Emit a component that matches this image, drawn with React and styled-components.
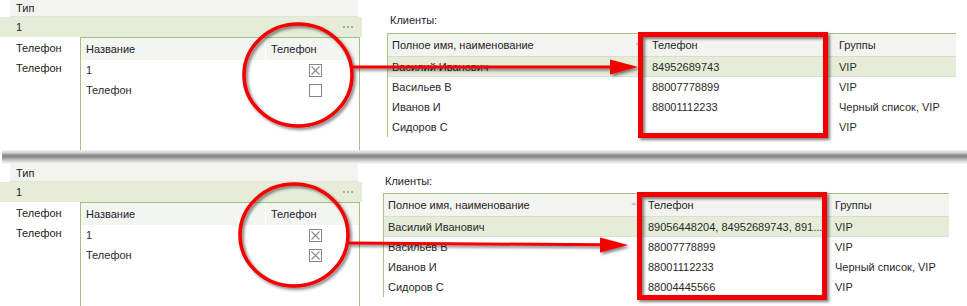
import React from "react";
import styled, { createGlobalStyle } from "styled-components";

const GlobalStyle = createGlobalStyle`
  html, body { margin: 0; padding: 0; background: #fff; }
  body {
    font-family: "Liberation Sans", Arial, sans-serif;
    font-size: 11px;
    color: #2a2a2a;
  }
`;

const Page = styled.div`
  width: 967px;
  height: 306px;
  overflow: hidden;
  display: flex;
  flex-direction: column;
  background: #fff;
`;

const Section = styled.section`
  position: relative;
  flex: none;
  height: ${(p) => p.$h}px;
  display: flex;
  overflow: hidden;
`;

const Divider = styled.div`
  flex: none;
  height: 14px;
  margin-left: 2px;
  background: linear-gradient(
    to bottom,
    #f2f2f2 0px,
    #d0d0d0 3px,
    #8e8e8e 5px,
    #8a8a8a 7px,
    #b4b4b4 9px,
    #e2e2e2 12px,
    #f6f6f6 14px
  );
`;

/* ---------- left panel ---------- */
const LeftPanel = styled.div`
  width: 362px;
  flex: none;
  display: flex;
  flex-direction: column;
`;

const TypeHeader = styled.div`
  height: ${(p) => p.$h}px;
  margin: 0 4px 0 10px;
  padding-left: 6px;
  display: flex;
  align-items: center;
  background: #f3f4ef;
  border-bottom: 1px solid #e1e4dc;
  color: #222;
`;

const GroupRow = styled.div`
  height: 20px;
  display: flex;
  align-items: center;
  justify-content: space-between;
  padding: 0 9px 0 16px;
  background: #e5edd9;
  color: #222;
`;

const Dots = styled.span`
  display: flex;
  gap: 2px;
  & > i {
    width: 2px;
    height: 2px;
    background: #a9a9a9;
  }
`;

const Body = styled.div`
  flex: 1;
  display: flex;
`;

const LabelCol = styled.div`
  width: 80px;
  flex: none;
  padding-top: 1px;
`;

const Label = styled.div`
  height: 20px;
  line-height: 20px;
  padding-left: 16px;
  color: #222;
`;

const InnerTable = styled.div`
  width: 278px;
  flex: none;
  border: 1px solid #a3c27f;
  border-bottom: none;
  display: flex;
  flex-direction: column;
`;

const InnerHead = styled.div`
  display: flex;
  height: 22px;
  gap: 1px;
`;

const InnerHeadCell = styled.div`
  width: ${(p) => p.$w}px;
  flex: ${(p) => (p.$w ? "none" : "1")};
  display: flex;
  align-items: center;
  padding-left: 5px;
  background: #f3f5f0;
  color: #241a33;
`;

const InnerRow = styled.div`
  display: flex;
  height: 20px;
  align-items: center;
`;

const NameCell = styled.div`
  width: 185px;
  flex: none;
  padding-left: 5px;
`;

const CheckCell = styled.div`
  flex: 1;
  display: flex;
  justify-content: center;
`;

const Box = styled.span`
  width: 13px;
  height: 13px;
  box-sizing: border-box;
  border: 1px solid #858585;
  background: #fff;
  display: flex;
  align-items: center;
  justify-content: center;
`;

/* ---------- right panel ---------- */
const RightPanel = styled.div`
  flex: 1;
  display: flex;
  flex-direction: column;
  padding-top: ${(p) => p.$top}px;
  gap: ${(p) => p.$gap}px;
`;

const Caption = styled.div`
  height: 14px;
  line-height: 14px;
  margin-left: ${(p) => p.$left}px;
  color: #2a1a33;
`;

const Grid = styled.div`
  margin-left: ${(p) => p.$left}px;
  width: ${(p) => p.$w}px;
  border-top: 1px solid #a6c381;
  border-left: 1px solid #a6c381;
  display: flex;
  flex-direction: column;
`;

const GridHead = styled.div`
  display: grid;
  grid-template-columns: ${(p) => p.$cols};
  height: 22px;
  background: #f3f4ef;
  border-bottom: 1px solid #d8ddd0;
  color: #1e1e1e;
`;

const GridRow = styled.div`
  display: grid;
  grid-template-columns: ${(p) => p.$cols};
  height: ${(p) => (p.$sel ? 19 : 20)}px;
  background: ${(p) => (p.$sel ? "#e5edd9" : "#fff")};
  border-bottom: ${(p) => (p.$sel ? "1px solid #d9ded2" : "none")};
`;

const Cell = styled.div`
  position: relative;
  display: flex;
  align-items: center;
  padding-left: ${(p) => p.$pad ?? 4}px;
  white-space: nowrap;
  overflow: hidden;
`;

const SortMark = styled.span`
  position: absolute;
  right: 6px;
  top: 8px;
  width: 0;
  height: 0;
  border-left: 3px solid transparent;
  border-right: 3px solid transparent;
  border-bottom: 3px solid #c4c4c4;
`;

/* ---------- annotation overlay ---------- */
const Overlay = styled.svg`
  position: absolute;
  left: 0;
  top: 0;
  pointer-events: none;
`;

function Annotations({ id, h, ellipse, arrow, rect }) {
  const [x1, y1, x2, y2] = arrow;
  const hx = x2 - 28;
  return (
    <Overlay width="967" height={h} viewBox={`0 0 967 ${h}`}>
      <defs>
        <filter id={id} x="-20%" y="-20%" width="140%" height="140%">
          <feDropShadow dx="2" dy="2" stdDeviation="1.4" floodColor="#000" floodOpacity="0.5" />
        </filter>
      </defs>
      <g filter={`url(#${id})`}>
        <ellipse cx={ellipse[0]} cy={ellipse[1]} rx={ellipse[2]} ry={ellipse[3]} fill="none" stroke="#f50000" strokeWidth="3.6" />
        <line x1={x1} y1={y1} x2={hx + 2} y2={y2 + (y1 - y2) * 0.08} stroke="#f50000" strokeWidth="3" />
        <polygon points={`${hx},${y2 - 7.5} ${x2},${y2} ${hx},${y2 + 7.5}`} fill="#f50000" />
        <rect x={rect[0]} y={rect[1]} width={rect[2]} height={rect[3]} fill="none" stroke="#f50000" strokeWidth="5" />
      </g>
    </Overlay>
  );
}

const XMark = () => (
  <svg width="11" height="11" viewBox="0 0 11 11">
    <path d="M1.5 1.5 L9.5 9.5 M9.5 1.5 L1.5 9.5" stroke="#8a8a8a" strokeWidth="1.1" />
  </svg>
);

function Panel({ typeH, checks, right, clients, overlay }) {
  const cols = right.cols;
  return (
    <Section $h={overlay.h}>
      <LeftPanel>
        <TypeHeader $h={typeH}>Тип</TypeHeader>
        <GroupRow>
          <span>1</span>
          <Dots><i /><i /><i /></Dots>
        </GroupRow>
        <Body>
          <LabelCol>
            <Label>Телефон</Label>
            <Label>Телефон</Label>
          </LabelCol>
          <InnerTable>
            <InnerHead>
              <InnerHeadCell $w={179}>Название</InnerHeadCell>
              <InnerHeadCell>Телефон</InnerHeadCell>
            </InnerHead>
            {["1", "Телефон"].map((n, i) => (
              <InnerRow key={n}>
                <NameCell>{n}</NameCell>
                <CheckCell>
                  <Box>{checks[i] && <XMark />}</Box>
                </CheckCell>
              </InnerRow>
            ))}
          </InnerTable>
        </Body>
      </LeftPanel>
      <RightPanel $top={right.top} $gap={right.gap}>
        <Caption $left={right.capLeft}>Клиенты:</Caption>
        <Grid $left={right.left} $w={right.w}>
          <GridHead $cols={cols}>
            <Cell>
              Полное имя, наименование
              <SortMark />
            </Cell>
            <Cell $pad={5}>Телефон</Cell>
            <Cell>Группы</Cell>
          </GridHead>
          {clients.map((c, i) => (
            <GridRow key={c[0]} $cols={cols} $sel={i === 0}>
              <Cell>{c[0]}</Cell>
              <Cell $pad={5}>{c[1]}</Cell>
              <Cell>{c[2]}</Cell>
            </GridRow>
          ))}
        </Grid>
      </RightPanel>
      <Annotations {...overlay} />
    </Section>
  );
}

const topClients = [
  ["Василий Иванович", "84952689743", "VIP"],
  ["Васильев В", "88007778899", "VIP"],
  ["Иванов И", "88001112233", "Черный список, VIP"],
  ["Сидоров С", "", "VIP"],
];

const bottomClients = [
  ["Василий Иванович", "89056448204, 84952689743, 891...", "VIP"],
  ["Васильев В", "88007778899", "VIP"],
  ["Иванов И", "88001112233", "Черный список, VIP"],
  ["Сидоров С", "88004445566", "VIP"],
];

export default function App() {
  return (
    <Page>
      <GlobalStyle />
      <Panel
        typeH={16}
        checks={[true, false]}
        clients={topClients}
        right={{ top: 13, gap: 6, capLeft: 28, left: 25, w: 568, cols: "259px 188px 1fr" }}
        overlay={{
          id: "shTop",
          h: 150,
          ellipse: [298, 75, 54, 51],
          arrow: [351, 67, 638, 67],
          rect: [640.5, 34.5, 185, 101],
        }}
      />
      <Divider />
      <Panel
        typeH={17}
        checks={[true, true]}
        clients={bottomClients}
        right={{ top: 10, gap: 5, capLeft: 23, left: 21, w: 565, cols: "259px 188px 1fr" }}
        overlay={{
          id: "shBot",
          h: 142,
          ellipse: [294, 71, 54, 51],
          arrow: [348, 79, 628, 81],
          rect: [639.5, 30.5, 185, 103],
        }}
      />
    </Page>
  );
}
